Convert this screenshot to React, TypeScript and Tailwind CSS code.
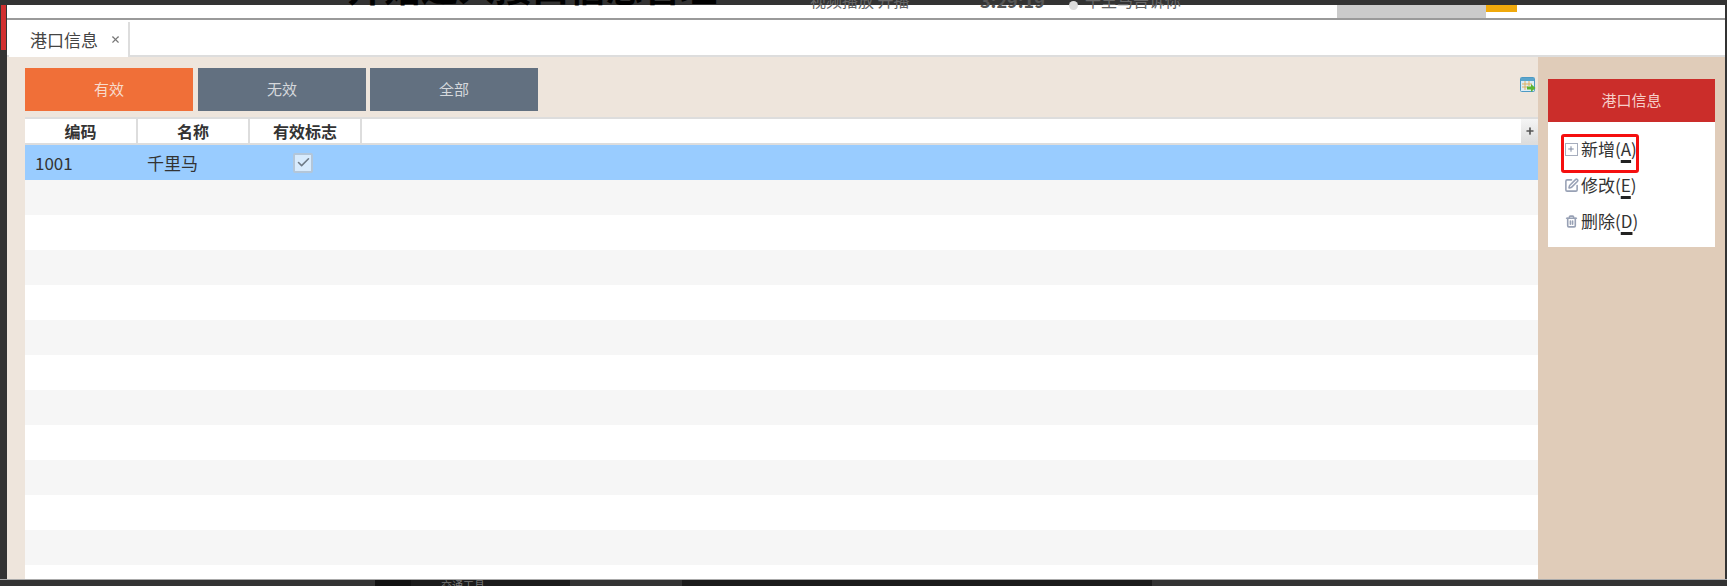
import { Plus, SquarePen, Trash2, Check, X } from "lucide-react";

const font = "font-['Noto_Sans_CJK_SC','Liberation_Sans',sans-serif]";

// strip of the window behind, only its lower edge shows
function TopStrip() {
  return (
    <div className="h-[15px] shrink-0 bg-white border-b-2 border-[#9a9a9a] relative">
      <div className="absolute left-[1330px] top-0 h-[13px] w-[149px] bg-[#cbcbcb]" />
      <div className="absolute left-[1479px] top-0 h-[7px] w-[31px] bg-[#f0a90c]" />
      <div className="absolute left-[340px] -top-[37px] text-[37px] font-bold text-black leading-[36px] whitespace-nowrap">
        开始进入接口信息管理
      </div>
      <div className="absolute left-[803px] -top-[13px] text-[16px] text-[#666] leading-[16px] whitespace-nowrap">
        视频播放 开播
      </div>
      <div className="absolute left-[973px] -top-[13px] text-[18px] font-bold text-[#555] leading-[16px] whitespace-nowrap">
        3:29:19
      </div>
      <div className="absolute left-[1062px] -top-[4px] w-[9px] h-[9px] rounded-full bg-[#dddddd]" />
      <div className="absolute left-[1078px] -top-[13px] text-[16px] text-[#666] leading-[16px] whitespace-nowrap">
        千里马告诉你
      </div>
    </div>
  );
}

function Tabs() {
  return (
    <div className="h-[37px] shrink-0 bg-white border-b-2 border-[#dddddd] pl-[2px] flex items-end">
      <div className="h-[35px] w-[121px] -mb-[2px] bg-white border-r-2 border-[#dddddd] flex items-center pl-[21px] gap-[12px] text-[17px] text-[#444]">
        <span>港口信息</span>
        <X size={11} strokeWidth={2.5} className="text-[#777]" />
      </div>
    </div>
  );
}

function Grid() {
  const rows = Array.from({ length: 11 });
  return (
    <div className="flex-1 min-h-0 overflow-hidden bg-white">
      <div className="h-[28px] flex border-t-2 border-b-2 border-[#dddddd] bg-white text-[16px] font-bold text-[#333]">
        <div className="w-[113px] border-r-2 border-[#dddddd] flex items-center justify-center">编码</div>
        <div className="w-[112px] border-r-2 border-[#dddddd] flex items-center justify-center">名称</div>
        <div className="w-[112px] border-r-2 border-[#dddddd] flex items-center justify-center">有效标志</div>
        <div className="flex-1" />
        <div className="w-[17px] bg-gradient-to-b from-[#f5f5f5] to-[#dddddd] flex items-center justify-center">
          <Plus size={10} strokeWidth={4} className="text-[#555]" />
        </div>
      </div>
      <div className="h-[35px] flex items-center bg-[#99ccff] text-[17px] text-[#333]">
        <div className="w-[113px] pl-[10px]">1001</div>
        <div className="w-[112px] pl-[9px]">千里马</div>
        <div className="w-[112px] flex justify-center pr-[6px]">
          <div className="w-[20px] h-[20px] rounded-[2px] bg-[#d8ebfd] border-2 border-[#b3c6d9] flex items-center justify-center">
            <Check size={15} strokeWidth={2.5} className="text-[#6f7b87]" />
          </div>
        </div>
      </div>
      {rows.map((_, i) => (
        <div key={i} className={i % 2 === 0 ? "h-[35px] bg-[#f6f6f6]" : "h-[35px] bg-white"} />
      ))}
    </div>
  );
}

function Main() {
  return (
    <div className="flex-1 min-w-0 bg-[#eee5dc] pl-[18px] pt-[11px] flex flex-col">
      <div className="h-[43px] flex gap-[5px] text-[15px] shrink-0">
        <div className="w-[168px] bg-[#f06f38] text-[#f8dccd] flex items-center justify-center">有效</div>
        <div className="w-[168px] bg-[#627080] text-[#d5d8dc] flex items-center justify-center">无效</div>
        <div className="w-[168px] -ml-[1px] bg-[#627080] text-[#d5d8dc] flex items-center justify-center">全部</div>
        <div className="flex-1 flex justify-end pr-[2px] pt-[9px]">
          <svg width="16" height="16" viewBox="0 0 16 16">
            <rect x="0.5" y="0.5" width="14" height="14" rx="1" fill="#dcecf5" stroke="#4d9ac4" />
            <rect x="1" y="1" width="13" height="3" fill="#5aa5cc" />
            <path d="M2 7h10M2 10h6M5 4v9M9 4v5" stroke="#e0b060" strokeWidth="1" />
            <path d="M7 9.5h4V7l4.5 4-4.5 4v-2.5H7z" fill="#5cb531" />
          </svg>
        </div>
      </div>
      <div className="h-[6px] shrink-0" />
      <Grid />
    </div>
  );
}

function MenuItem({ icon, label, hot }: { icon: React.ReactNode; label: string; hot: string }) {
  return (
    <div className="h-[36px] flex items-center text-[17px] text-[#333]">
      <div className="w-[16px] flex justify-center mr-[2px]">{icon}</div>
      <span>
        {label}(
        <span className="underline decoration-[3px] decoration-[#222] underline-offset-[4px] [text-decoration-skip-ink:none]">
          {hot}
        </span>
        )
      </span>
    </div>
  );
}

function Sidebar() {
  return (
    <div className="w-[187px] shrink-0 bg-[#e0ccb9] pt-[22px] px-[10px]">
      <div className="h-[43px] bg-[#cb2d2a] text-[#f6cfc9] text-[15px] flex items-center justify-center">港口信息</div>
      <div className="h-[125px] bg-white pt-[9px] pl-[15px] relative">
        <MenuItem
          icon={
            <div className="w-[13px] h-[13px] border border-[#a6adbd] flex items-center justify-center">
              <Plus size={8} strokeWidth={3} className="text-[#7f89a0]" />
            </div>
          }
          label="新增"
          hot="A"
        />
        <MenuItem icon={<SquarePen size={15} strokeWidth={2.5} className="text-[#98a1b5]" />} label="修改" hot="E" />
        <MenuItem icon={<Trash2 size={13} strokeWidth={3} className="text-[#98a1b5]" />} label="删除" hot="D" />
        <div className="absolute left-[13px] top-[12px] w-[78px] h-[39px] border-[3px] border-[#f50f0f] rounded-[3px]" />
      </div>
    </div>
  );
}

// taskbar of the desktop behind, cut off by the picture's lower edge
function BottomStrip() {
  return (
    <div className="h-[6px] shrink-0 bg-[#333333] flex overflow-hidden text-[11px] leading-[10px] text-[#777]">
      <div className="w-[375px] shrink-0" />
      <div className="w-[36px] shrink-0 bg-[#111111]" />
      <div className="w-[159px] shrink-0 bg-[#1b1b1b] pl-[30px] whitespace-nowrap">交通工具</div>
      <div className="w-[6px] shrink-0 bg-[#333333]" />
      <div className="w-[106px] shrink-0" />
      <div className="w-[470px] shrink-0 bg-[#1b1b1b]" />
    </div>
  );
}

export default function App() {
  return (
    <div className={`w-[1727px] h-[586px] bg-[#333333] overflow-hidden flex flex-col pt-[5px] ${font}`}>
      <div className="flex-1 min-h-0 flex border-b border-[#aaaaaa]">
        <div className="w-[7px] shrink-0 relative">
          <div className="absolute left-[1px] top-0 w-[5px] h-[45px] bg-[#d12f2f]" />
        </div>
        <div className="flex-1 min-w-0 flex flex-col pr-[2px]">
          <TopStrip />
          <Tabs />
          <div className="flex-1 min-h-0 flex">
            <Main />
            <Sidebar />
          </div>
        </div>
      </div>
      <BottomStrip />
    </div>
  );
}
